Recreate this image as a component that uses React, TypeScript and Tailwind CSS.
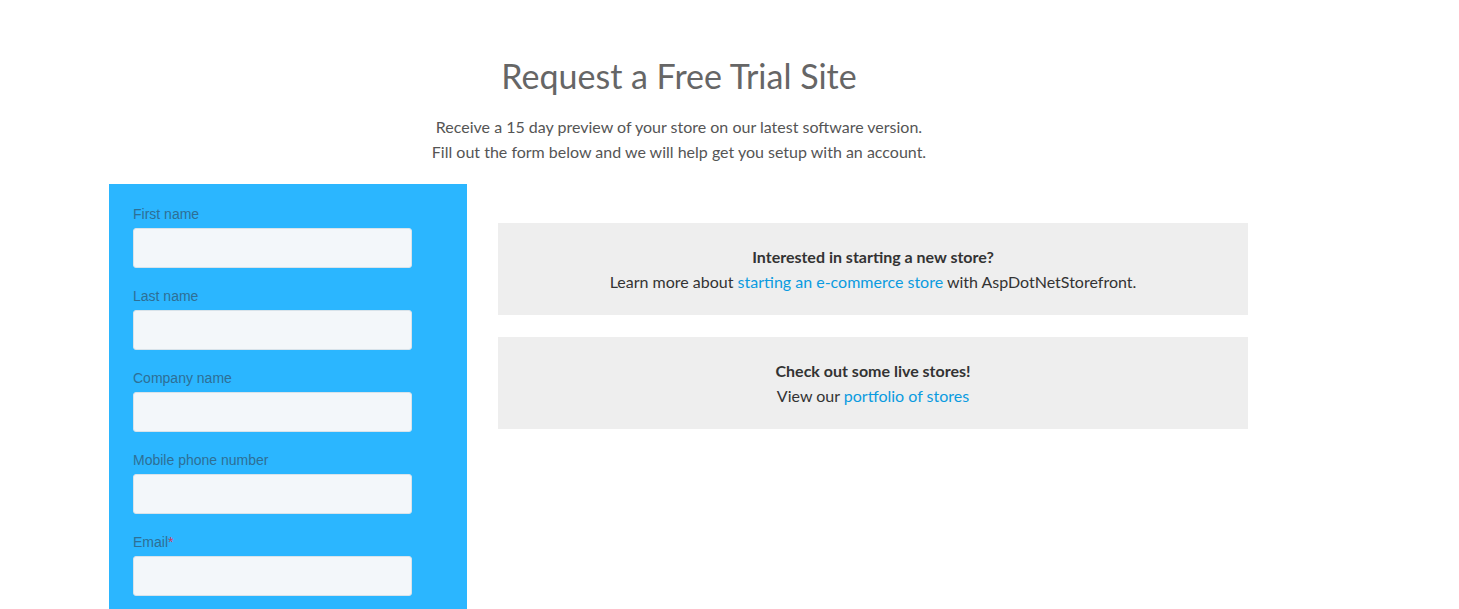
import React from 'react';

const fields = [
  { label: 'First name' },
  { label: 'Last name' },
  { label: 'Company name' },
  { label: 'Mobile phone number' },
  { label: 'Email', required: true },
];

const App: React.FC = () => {
  return (
    <div className="min-h-[609px] bg-white font-['Lato','Liberation_Sans',sans-serif] overflow-hidden">
      <div className="ml-[109px] w-[1140px]">
        {/* Header */}
        <div className="pt-[54px] text-center">
          <h1 className="text-[34px] leading-[44px] text-[#666] font-normal">Request a Free Trial Site</h1>
          <p className="mt-[16px] text-[16px] leading-[25px] text-[#555]">
            Receive a 15 day preview of your store on our latest software version.
            <br />
            Fill out the form below and we will help get you setup with an account.
          </p>
        </div>

        <div className="mt-[20px] flex items-start">
          {/* Form panel */}
          <div className="w-[358px] h-[440px] bg-[#2bb6ff] px-[24px] pt-[21px]">
            {fields.map((f) => (
              <div key={f.label} className="mb-[19px]">
                <label className="block font-['Liberation_Sans',Arial,sans-serif] text-[14px] leading-[18px] text-[#2e6f95] mb-[5px]">
                  {f.label}
                  {f.required && <span className="text-[#d23a5c]">*</span>}
                </label>
                <input
                  type="text"
                  className="block w-[279px] h-[40px] rounded-[3px] bg-[#f3f7fa] border border-[#d8e3ea] outline-none"
                />
              </div>
            ))}
          </div>

          {/* Info boxes */}
          <div className="ml-[31px] w-[750px] pt-[39px] flex flex-col gap-[22px]">
            <div className="h-[92px] bg-[#eeeeee] flex flex-col items-center justify-center text-[16px] leading-[25px] text-[#333]">
              <div className="font-bold">Interested in starting a new store?</div>
              <div>
                Learn more about{' '}
                <a href="#" className="text-[#0a9be0]">starting an e-commerce store</a> with AspDotNetStorefront.
              </div>
            </div>
            <div className="h-[92px] bg-[#eeeeee] flex flex-col items-center justify-center text-[16px] leading-[25px] text-[#333]">
              <div className="font-bold">Check out some live stores!</div>
              <div>
                View our <a href="#" className="text-[#0a9be0]">portfolio of stores</a>
              </div>
            </div>
          </div>
        </div>
      </div>
    </div>
  );
};

export default App;
